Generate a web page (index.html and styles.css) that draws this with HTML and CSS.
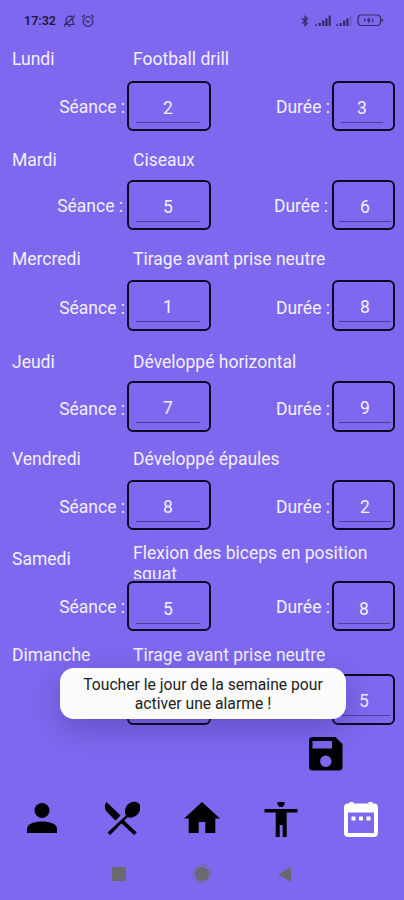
FILE: index.html
```
<!DOCTYPE html>
<html lang="fr">
<head>
    <meta charset="UTF-8">
    <meta name="viewport" content="width=device-width, initial-scale=1.0">
    <title>Planning</title>
    <link rel="stylesheet" href="styles.css">
</head>
<body>
    <div class="screen">
        <header class="status">
            <span class="time">17:32</span>
            <svg class="mute" width="13" height="14" viewBox="0 0 13 14"><path d="M2 10.5h9L9.8 8.8V5.5a3.3 3.3 0 0 0-6.6 0v3.3zM5.2 12.2h2.6M1 12.5L12 1.5"/></svg>
            <svg class="alarm" width="14" height="14" viewBox="0 0 14 14"><circle cx="7" cy="7.5" r="4.8"/><path d="M4.6 6.5L7 8l2-.7M1 3.2L3.6 1M13 3.2L10.4 1"/></svg>
            <svg class="bluetooth" width="8" height="12" viewBox="0 0 8 12"><path d="M1 3.3l5.5 5L4 10.7V1.3l2.5 2.4-5.500 5"/></svg>
            <svg class="signal" width="16" height="12" viewBox="0 0 16 12"><path d="M0 11V9.500h2V11zM3.500 11V8h2.300v3zM7 11V5.500h2.300V11zM10.300 11V3.500h2.300V11zM13.600 11V.5h2.200V11z"/></svg>
            <svg class="signal second" width="16" height="12" viewBox="0 0 16 12"><path d="M0 11V9.500h2V11zM3.500 11V8h2.300v3zM7 11V5.500h2.300V11zM10.300 11V3.500h2.300V11z"/><path opacity=".35" d="M14 11V.5h1.300V11z"/></svg>
            <svg class="battery" width="27" height="13" viewBox="0 0 27 13"><rect x="1" y="1" width="22.500" height="10.500" rx="3.500"/><path class="fill" d="M24.500 4l2 2.200-2 2.300z"/><path d="M8 4.500a4 4 0 0 0 0 3.600M15.500 4.500a4 4 0 0 1 0 3.600"/><path class="fill" d="M12.800 2.800L9.500 6.800h2l-.6 3 3.400-4h-2z"/></svg>
        </header>

        <main class="week">
            <section class="day lundi">
                <div class="head"><span class="name">Lundi</span><span class="exercise">Football drill</span></div>
                <div class="fields">
                    <span class="label">Séance :</span><div class="box"><span class="value">2</span></div>
                    <span class="label">Durée :</span><div class="box"><span class="value">3</span></div>
                </div>
            </section>
            <section class="day mardi">
                <div class="head"><span class="name">Mardi</span><span class="exercise">Ciseaux</span></div>
                <div class="fields">
                    <span class="label">Séance :</span><div class="box"><span class="value">5</span></div>
                    <span class="label">Durée :</span><div class="box"><span class="value">6</span></div>
                </div>
            </section>
            <section class="day mercredi">
                <div class="head"><span class="name">Mercredi</span><span class="exercise">Tirage avant prise neutre</span></div>
                <div class="fields">
                    <span class="label">Séance :</span><div class="box"><span class="value">1</span></div>
                    <span class="label">Durée :</span><div class="box"><span class="value">8</span></div>
                </div>
            </section>
            <section class="day jeudi">
                <div class="head"><span class="name">Jeudi</span><span class="exercise">Développé horizontal</span></div>
                <div class="fields">
                    <span class="label">Séance :</span><div class="box"><span class="value">7</span></div>
                    <span class="label">Durée :</span><div class="box"><span class="value">9</span></div>
                </div>
            </section>
            <section class="day vendredi">
                <div class="head"><span class="name">Vendredi</span><span class="exercise">Développé épaules</span></div>
                <div class="fields">
                    <span class="label">Séance :</span><div class="box"><span class="value">8</span></div>
                    <span class="label">Durée :</span><div class="box"><span class="value">2</span></div>
                </div>
            </section>
            <section class="day samedi">
                <div class="head"><span class="name">Samedi</span><span class="exercise">Flexion des biceps en position squat</span></div>
                <div class="fields">
                    <span class="label">Séance :</span><div class="box"><span class="value">5</span></div>
                    <span class="label">Durée :</span><div class="box"><span class="value">8</span></div>
                </div>
            </section>
            <section class="day dimanche">
                <div class="head"><span class="name">Dimanche</span><span class="exercise">Tirage avant prise neutre</span></div>
                <div class="fields">
                    <span class="label"></span><div class="box"></div>
                    <span class="label"></span><div class="box"><span class="value">5</span></div>
                </div>
            </section>
        </main>

        <div class="actions">
            <svg width="34" height="34" viewBox="0 0 34 34"><path fill-rule="evenodd" d="M3.500 0H26.500L33.500 7V30a3.500 3.500 0 0 1-3.500 3.500H3.500A3.500 3.500 0 0 1 0 30V3.500A3.500 3.500 0 0 1 3.500 0zM3.500 4v7.500H23V4zM16.800 18.500a5.700 5.700 0 1 0 .01 0z"/></svg>
        </div>

        <nav class="tabs">
            <svg viewBox="0 0 36 36"><circle cx="18" cy="9.500" r="7.500"/><path d="M3 32v-4.500c0-4.500 8-7 15-7s15 2.500 15 7V32z"/></svg>
            <svg viewBox="0 0 36 36"><path d="M2.500 1C-.5 5 1 9 3.500 11.500l8 8 5-5z"/><path d="M22 14.500C19 9 23 1 30 .8c5-.3 7.500 4 6 8.500-2 6-8 8.500-12.500 7L6.200 34 3.500 31.500z"/><path d="M15.500 20.500l3-2.500 14.300 13.500-2.800 2.500z"/></svg>
            <svg viewBox="0 0 36 36"><path d="M18 1l18 16.500h-4.700V32h-10V21h-6.600v11h-10V17.500H0z"/></svg>
            <svg viewBox="0 0 36 36"><path d="M14.500 1h7v2.500L19.500 6h-3l-2-2.500z"/><path d="M1.500 8h33v3.500H23.700V36h-4V24h-3v12h-4V11.500H1.500z"/></svg>
            <svg class="active" viewBox="0 0 36 36"><path fill-rule="evenodd" d="M6.500 1h4v1.500h15V1h4v1.500h1.500a4 4 0 0 1 4 4V32a4 4 0 0 1-4 4H5a4 4 0 0 1-4-4V6.500a4 4 0 0 1 4-4h1.500zM5 11.500V32h26V11.500zM8.500 15.500h4v4h-4zM16 15.500h4v4h-4zM23.500 15.500h4v4h-4z"/></svg>
        </nav>

        <footer class="system">
            <svg width="14" height="14" viewBox="0 0 14 14"><path d="M0 0h14v14H0z"/></svg>
            <svg width="20" height="20" viewBox="0 0 20 20"><circle cx="10" cy="10" r="7.300"/><circle cx="10" cy="10" r="9.300" fill="none" stroke="#716d91" stroke-width="1"/></svg>
            <svg width="14" height="15" viewBox="0 0 14 15"><path d="M0 7.500L13 0v15z"/></svg>
        </footer>

        <div class="toast">Toucher le jour de la semaine pour activer une alarme !</div>
    </div>
</body>
</html>
```
FILE: styles.css
```
* {
    box-sizing: border-box;
}

body {
    margin: 0;
    background: #7e68f0;
    font-family: Roboto, "Liberation Sans", sans-serif;
}

.screen {
    position: relative;
    width: 404px;
    height: 900px;
    overflow: hidden;
    display: flex;
    flex-direction: column;
    color: #f3efff;
    font-size: 17.5px;
}

/* status bar */
.status {
    height: 40px;
    flex: none;
    display: flex;
    align-items: center;
    padding: 1px 20px 0 24px;
}

.status svg {
    fill: none;
    stroke: #352b68;
    stroke-width: 1.2;
}

.time {
    width: 32px;
    color: #1c1541;
    font-size: 12.5px;
    font-weight: 600;
}

.mute {
    margin-left: 7px;
}

.alarm {
    margin-left: 5px;
}

.bluetooth {
    margin-left: auto;
}

.status .signal {
    margin-left: 6px;
    fill: #352b68;
    stroke: none;
}

.status .second {
    margin-left: 5px;
}

.battery {
    margin-left: 5px;
}

.status .battery .fill {
    fill: #352b68;
    stroke: none;
}

/* days */
.week {
    height: 685px;
    flex: none;
}

.head {
    display: grid;
    grid-template-columns: 121px 240px;
    align-items: start;
    height: 50px;
    padding: 18px 0 0 12px;
    line-height: 22px;
    overflow: hidden;
}

.fields {
    display: grid;
    grid-template-columns: 127px 84px 121px 63px;
    height: 50px;
}

.label {
    padding: 15px 2px 0 0;
    line-height: 22px;
    text-align: right;
    white-space: nowrap;
}

.box {
    border: 2px solid #0b0820;
    border-radius: 6px;
    padding: 0 9px 0 7px;
}

.box:last-child {
    padding: 0 2px 0 5px;
}

.value {
    display: block;
    height: 40px;
    padding-top: 14px;
    border-bottom: 1px solid #4c3f9c;
    line-height: 22px;
    text-align: center;
}

.lundi .head {
    height: 41px;
    padding-top: 8px;
}

.lundi .box:last-child {
    padding: 0 10px 0 7px;
}

.mardi .head {
    height: 49px;
}

.mardi .label {
    padding-right: 4px;
}

.mercredi .fields,
.jeudi .fields,
.dimanche .fields {
    height: 51px;
}

.mercredi .label,
.jeudi .label {
    padding-top: 17px;
}

.vendredi .label {
    padding-top: 16px;
}

.jeudi .head {
    padding-top: 20px;
}

.vendredi .head {
    height: 48px;
    padding-top: 16px;
}

.samedi .head {
    height: 51px;
    padding-top: 13px;
    line-height: 21px;
}

.samedi .name {
    padding-top: 6px;
}

.samedi .exercise {
    height: 36px;
    overflow: hidden;
}

.samedi .value {
    height: 41px;
    padding-top: 15px;
}

.samedi .box:last-child,
.dimanche .box:last-child {
    padding: 0 3px 0 4px;
}

.dimanche .head {
    height: 43px;
    padding-top: 13px;
}

/* bottom part */
.actions {
    height: 74px;
    flex: none;
    display: flex;
    justify-content: flex-end;
    padding: 12px 61px 0 0;
}

.tabs {
    height: 48px;
    flex: none;
    display: flex;
    justify-content: space-between;
    padding: 2px 25px 0 24px;
    border-bottom: 1px solid #7865e6;
}

.tabs svg {
    width: 36px;
    height: 36px;
}

.tabs .active {
    fill: #fff;
}

.system {
    flex: 1;
    display: flex;
    align-items: center;
    padding: 1px 112px 0;
    fill: #696a70;
    justify-content: space-between;
}

.toast {
    position: absolute;
    left: 60px;
    top: 668px;
    width: 286px;
    height: 51px;
    padding: 7px 20px 0;
    border-radius: 14px;
    background: #fcfcfd;
    box-shadow: 0 10px 30px rgba(40, 30, 90, 0.3);
    color: #222;
    font-size: 15.7px;
    line-height: 19px;
    text-align: center;
}
```
